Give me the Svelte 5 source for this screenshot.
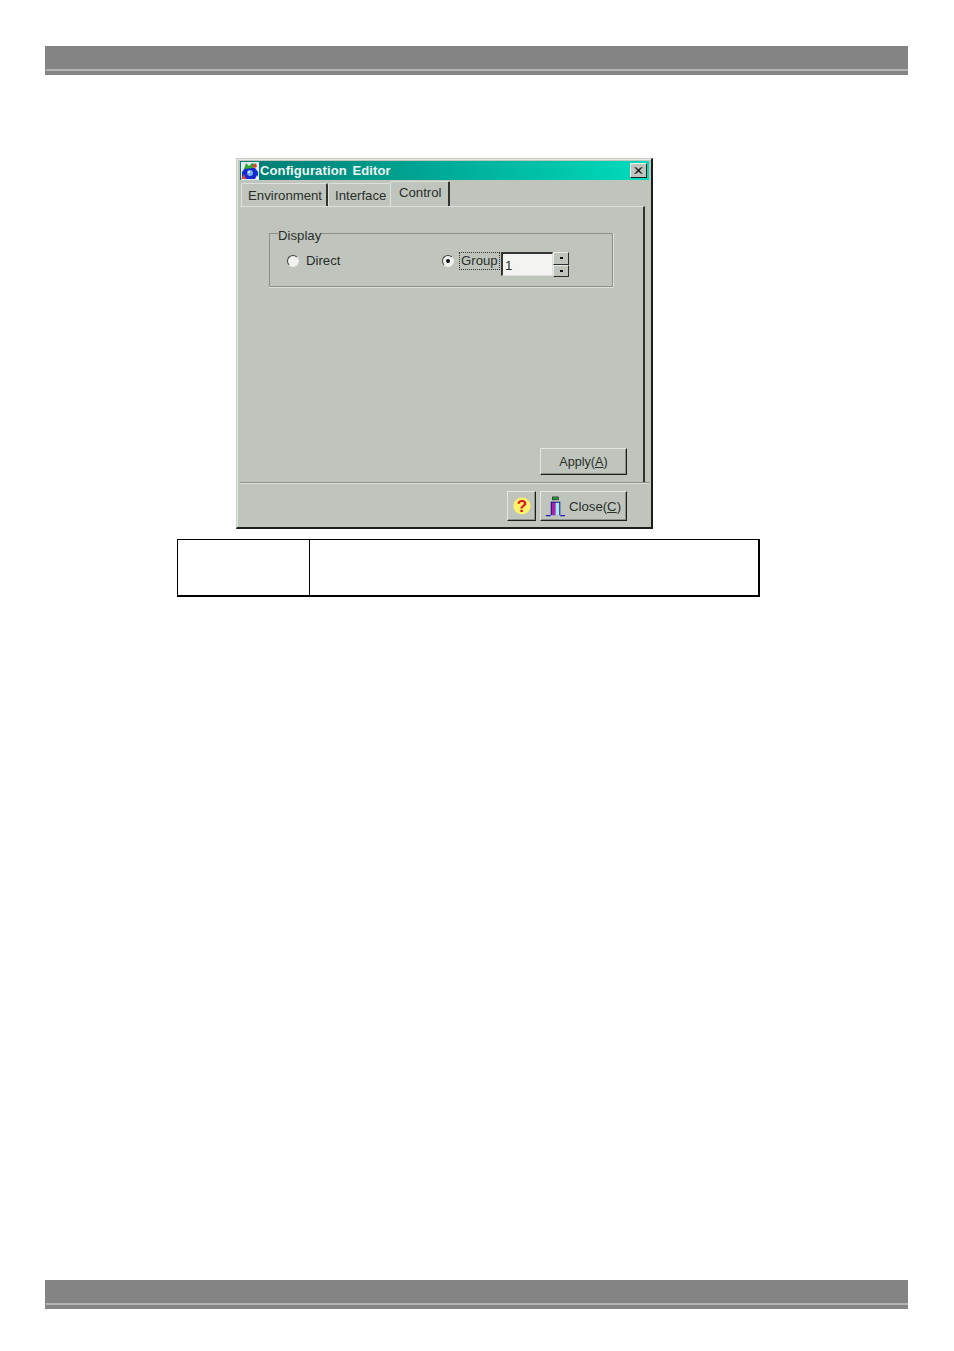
<script lang="ts">
  let groupCount = $state(1);
</script>

<div class="page">
  <div class="bar"></div>

  <section class="dialog" aria-label="Configuration Editor">
    <header class="titlebar">
      <svg class="app-icon" viewBox="0 0 18 18" aria-hidden="true">
        <rect width="18" height="18" fill="#e8e8f0" />
        <path d="M1 17 L1 10 L4 6 L14 6 L17 10 L17 17 Z" fill="#1828d0" />
        <path d="M3 7 L5 1 L8 4 L11 1 L14 2 L12 6 Z" fill="#30a838" />
        <path d="M11 4 L15 1 L16 5 L13 6 Z" fill="#d84030" />
        <circle cx="9" cy="11" r="3" fill="#70b0f8" />
        <circle cx="8" cy="10" r="1" fill="#f0f4ff" />
        <path d="M0 17 L3 12 L5 17 Z" fill="#e04848" />
        <path d="M14 17 L16 13 L18 17 Z" fill="#f0f0f8" />
      </svg>
      <span class="title">Configuration Editor</span>
      <button class="close-x" aria-label="Close">
        <svg viewBox="0 0 10 9" aria-hidden="true">
          <path d="M1 1 L8 8 M2 1 L9 8 M8 1 L1 8 M9 1 L2 8" stroke="#000" stroke-width="1.1" fill="none" />
        </svg>
      </button>
    </header>

    <div class="tabs">
      <span class="tab tab-env">Environment</span>
      <span class="tab tab-if">Interface</span>
      <span class="tab active">Control</span>
    </div>

    <div class="panel">
      <fieldset class="group">
        <legend>Display</legend>
        <label class="radio direct">
          <span class="dot"></span>
          <span>Direct</span>
        </label>
        <label class="radio grouped">
          <span class="dot on"></span>
          <span class="focus">Group</span>
        </label>
        <span class="spin">
          <span class="spin-input">{groupCount}</span>
          <span class="spin-btns">
            <span class="spin-btn"><i class="up"></i></span>
            <span class="spin-btn"><i class="down"></i></span>
          </span>
        </span>
      </fieldset>

      <div class="apply-row">
        <button class="btn apply">Apply(<u>A</u>)</button>
      </div>
    </div>

    <footer class="footer">
      <button class="btn help" aria-label="Help">
        <svg viewBox="0 0 18 18" aria-hidden="true">
          <circle cx="9" cy="9" r="8.5" fill="#fff36a" />
          <text x="9" y="15" text-anchor="middle" class="q">?</text>
        </svg>
      </button>
      <button class="btn close">
        <svg viewBox="0 0 22 22" aria-hidden="true">
          <rect x="8" y="1" width="6" height="3" fill="#20a040" stroke="#101010" stroke-width="0.6" />
          <rect x="6" y="6" width="10" height="14" fill="#101080" />
          <rect x="7" y="7" width="4" height="13" fill="#b020b0" />
          <rect x="11" y="7" width="4" height="13" fill="#a8e8f0" />
          <path d="M1 20.5 H6 M16 20.5 H21" stroke="#2020b0" stroke-width="1.2" />
        </svg>
        <span>Close(<u>C</u>)</span>
      </button>
    </footer>
  </section>

  <table class="note">
    <tbody>
      <tr>
        <td class="key"></td>
        <td></td>
      </tr>
    </tbody>
  </table>

  <div class="spacer"></div>
  <div class="bar"></div>
</div>

<style>
  :global(body) {
    margin: 0;
    background: #fff;
  }

  .page {
    display: flex;
    flex-direction: column;
    width: 954px;
    height: 1351px;
    padding-top: 46px;
    box-sizing: border-box;
    font-family: "Liberation Sans", Arial, sans-serif;
    font-size: 13.2px;
    color: #2a2e2a;
  }

  .bar {
    flex: none;
    width: 863px;
    height: 29px;
    margin-left: 45px;
    box-sizing: border-box;
    background: #848484;
    position: relative;
  }

  .bar::after {
    content: "";
    position: absolute;
    left: 1px;
    right: 0;
    top: 23px;
    height: 2px;
    background: #b4b4b4;
  }

  .dialog {
    flex: none;
    width: 417px;
    height: 371px;
    margin: 83px 0 0 236px;
    box-sizing: border-box;
    display: flex;
    flex-direction: column;
    padding: 3px 2px 2px 3px;
    background: #bfc5bd;
    border-top: 1px solid #c8cdc6;
    border-left: 1px solid #c8cdc6;
    border-right: 2px solid #1c1e1c;
    border-bottom: 2px solid #1c1e1c;
    box-shadow: inset 1px 1px 0 #e4e8e2;
  }

  .titlebar {
    flex: none;
    height: 19px;
    display: flex;
    align-items: center;
    padding: 0 2px 0 1px;
    margin-top: -1px;
    background: linear-gradient(90deg, #007a72, #00dcbc);
  }

  .app-icon {
    flex: none;
    width: 18px;
    height: 18px;
  }

  .title {
    flex: 1;
    margin-left: 1px;
    font-size: 13px;
    font-weight: 700;
    letter-spacing: 0.12px;
    word-spacing: 2px;
    color: #eef6f2;
  }

  .close-x {
    flex: none;
    width: 17px;
    height: 15px;
    padding: 2px 3px;
    display: flex;
    background: #bfc5bd;
    border: 1px solid;
    border-color: #eef0ec #1c1e1c #1c1e1c #eef0ec;
    box-sizing: border-box;
  }

  .close-x svg {
    width: 100%;
    height: 100%;
  }

  .tabs {
    flex: none;
    height: 25px;
    display: flex;
    align-items: flex-end;
    padding-left: 1px;
    margin-top: 1px;
  }

  .tab {
    box-sizing: border-box;
    height: 23px;
    padding: 4px 4px 0 6px;
    border-top: 1px solid #dde1db;
    border-left: 1px solid #dde1db;
    border-right: 2px solid #303430;
    border-radius: 2px 2px 0 0;
    white-space: nowrap;
  }

  .tab-env {
    width: 87px;
  }

  .tab-if {
    width: 62px;
    padding-right: 0;
    border-right: none;
  }

  .tab.active {
    width: 60px;
    height: 26px;
    padding: 3px 0 0 8px;
    background: #bfc5bd;
    margin-bottom: -1px;
    position: relative;
  }

  .panel {
    flex: none;
    height: 276px;
    width: 405px;
    box-sizing: border-box;
    position: relative;
    display: flex;
    flex-direction: column;
    border-top: 1px solid #dde1db;
    border-right: 2px solid #303430;
    padding: 19px 0 0 29px;
  }

  .group {
    box-sizing: border-box;
    width: 344px;
    height: 61px;
    margin: 0;
    padding: 0;
    border: 1px solid #8b908a;
    box-shadow: 0 1px 0 #dde1db, 1px 0 0 #dde1db;
    position: relative;
    display: block;
    min-inline-size: 0;
  }

  legend {
    padding: 0;
    margin-left: 8px;
    line-height: 20px;
    height: 14px;
  }

  /* controls inside the group box sit on a fixed grid */
  .radio {
    position: absolute;
    top: 13px;
    display: flex;
    align-items: center;
    line-height: 16px;
  }

  .direct {
    left: 17px;
  }

  .grouped {
    left: 172px;
  }

  .dot {
    box-sizing: border-box;
    width: 12px;
    height: 12px;
    border-radius: 50%;
    background: #f2f3f0;
    border: 1px solid;
    border-color: #3c403c #e8ebe6 #e8ebe6 #3c403c;
    margin-right: 7px;
    position: relative;
  }

  .dot.on::after {
    content: "";
    position: absolute;
    left: 3px;
    top: 3px;
    width: 4px;
    height: 4px;
    border-radius: 50%;
    background: #111;
  }

  .focus {
    margin-left: -1px;
    outline: 1px dotted #303430;
    padding: 0 1px;
    height: 16px;
  }

  .spin {
    position: absolute;
    left: 231px;
    top: 12px;
    display: flex;
  }

  .spin-input {
    box-sizing: border-box;
    width: 52px;
    height: 24px;
    padding: 4px 0 0 2px;
    line-height: 16px;
    background: #f3f4f1;
    border-top: 2px solid #333733;
    border-left: 2px solid #333733;
    border-right: 1px solid #dde1db;
    border-bottom: 1px solid #dde1db;
  }

  .spin-btns {
    display: flex;
    flex-direction: column;
    width: 16px;
    height: 25px;
  }

  .spin-btn {
    box-sizing: border-box;
    flex: 1;
    display: flex;
    align-items: center;
    justify-content: center;
    border: 1px solid;
    border-color: #e8ebe6 #2a2e2a #2a2e2a #e8ebe6;
  }

  .spin-btn i {
    width: 3px;
    height: 2px;
    background: #111;
  }

  .apply-row {
    display: flex;
    justify-content: flex-end;
    margin-top: 161px;
    padding-right: 16px;
  }

  .btn {
    box-sizing: border-box;
    padding: 0;
    background: #bfc5bd;
    font: inherit;
    color: inherit;
    border: 1px solid;
    border-color: #e4e8e2 #1c1e1c #1c1e1c #e4e8e2;
    box-shadow: inset -1px -1px 0 #8b908a;
    display: flex;
    align-items: center;
    justify-content: center;
  }

  .apply {
    width: 87px;
    height: 27px;
    font-size: 12.6px;
  }

  .footer {
    flex: 1;
    display: flex;
    justify-content: flex-end;
    align-items: flex-start;
    gap: 4px;
    padding: 8px 22px 0 0;
    border-top: 1px solid #8b908a;
    box-shadow: inset 0 1px 0 #dde1db;
  }

  .help {
    width: 29px;
    height: 30px;
  }

  .help svg {
    width: 18px;
    height: 18px;
  }

  .q {
    font-family: "Liberation Sans", Arial, sans-serif;
    font-size: 17px;
    font-weight: 700;
    fill: #e01020;
  }

  .close {
    width: 87px;
    height: 30px;
    gap: 3px;
    justify-content: flex-start;
    padding-left: 4px;
  }

  .close svg {
    width: 21px;
    height: 21px;
  }

  .note {
    flex: none;
    width: 583px;
    height: 58px;
    margin: 10px 0 0 177px;
    border-collapse: separate;
    border-spacing: 0;
    box-sizing: border-box;
    border-top: 1px solid #000;
    border-left: 1px solid #000;
    border-right: 2px solid #000;
    border-bottom: 2px solid #000;
  }

  .note td {
    padding: 0;
  }

  .key {
    width: 131px;
    border-right: 1px solid #000;
  }

  .spacer {
    flex: none;
    height: 683px;
  }
</style>
